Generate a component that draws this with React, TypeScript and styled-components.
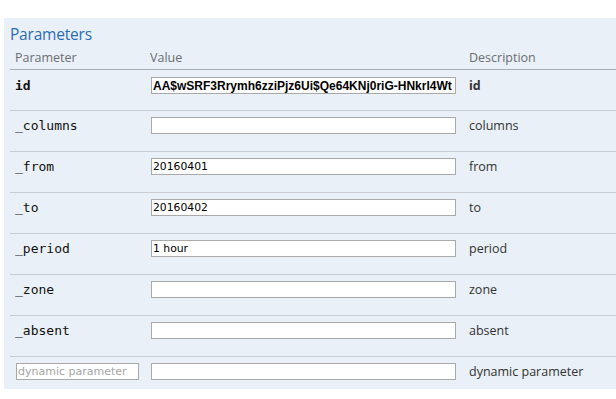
import React from "react";
import styled, { createGlobalStyle } from "styled-components";

const Global = createGlobalStyle`
  html, body { margin: 0; padding: 0; background: #ffffff; }
  body { font-family: "Open Sans", sans-serif; }
`;

const Page = styled.div`
  padding: 18px 0 0 4px;
  width: 640px;
`;

const Panel = styled.section`
  background: #e9f0f7;
  padding: 6px 0 0 6px;
`;

const Title = styled.h2`
  margin: 0;
  height: 20px;
  line-height: 20px;
  font-family: "Open Sans", sans-serif;
  font-weight: 400;
  font-size: 15.5px;
  color: #2b6cb5;
  letter-spacing: -0.2px;
`;

const Grid = styled.div`
  display: grid;
  grid-template-columns: 140px 319px 1fr;
`;

const HeadRow = styled(Grid)`
  height: 25px;
  border-bottom: 1px solid #a9adb1;
  align-items: end;
`;

const HeadCell = styled.div<{ $pad?: number }>`
  padding-left: ${(p) => p.$pad ?? 0}px;
  padding-bottom: 3px;
  font-family: "Open Sans", sans-serif;
  font-size: 12.5px;
  line-height: 16px;
  color: #6b6e72;
`;

const Row = styled(Grid)<{ $first?: boolean; $last?: boolean }>`
  height: ${(p) => (p.$first ? 40 : p.$last ? 33 : 41)}px;
  padding-top: ${(p) => (p.$first ? 7 : 6)}px;
  box-sizing: border-box;
  border-top: ${(p) => (p.$first ? "none" : "1px solid #c9cdd1")};
  align-items: start;
`;

const Name = styled.div<{ $bold?: boolean }>`
  padding-left: 5px;
  font-family: "DejaVu Sans Mono", monospace;
  font-size: 13px;
  line-height: 17px;
  font-weight: ${(p) => (p.$bold ? 700 : 400)};
  color: #111;
`;

const NameInput = styled.input`
  display: block;
  margin-left: 6px;
  width: 123px;
  height: 17px;
  box-sizing: border-box;
  border: 1px solid #a9a9a9;
  padding: 0 1px;
  font-family: "DejaVu Sans", sans-serif;
  font-size: 11px;
  background: #fff;
  outline: none;
  &::placeholder { color: #a5a5a5; }
`;

const ValueInput = styled.input<{ $bold?: boolean }>`
  display: block;
  margin-left: 1px;
  width: 305px;
  height: 17px;
  box-sizing: border-box;
  border: 1px solid #a9a9a9;
  padding: 0 1px;
  font-family: ${(p) => (p.$bold ? '"Liberation Sans", sans-serif' : '"DejaVu Sans", sans-serif')};
  font-size: ${(p) => (p.$bold ? "12px" : "10.8px")};
  font-weight: ${(p) => (p.$bold ? 700 : 400)};
  color: #000;
  background: #fff;
  outline: none;
`;

const Desc = styled.div<{ $bold?: boolean }>`
  font-family: "Open Sans", sans-serif;
  font-size: 12.5px;
  line-height: 17px;
  font-weight: ${(p) => (p.$bold ? 700 : 400)};
  color: #333;
`;

type P = { name: string; value: string; desc: string; bold?: boolean };

const params: P[] = [
  { name: "id", value: "AA$wSRF3Rrymh6zziPjz6Ui$Qe64KNj0riG-HNkrl4Wt", desc: "id", bold: true },
  { name: "_columns", value: "", desc: "columns" },
  { name: "_from", value: "20160401", desc: "from" },
  { name: "_to", value: "20160402", desc: "to" },
  { name: "_period", value: "1 hour", desc: "period" },
  { name: "_zone", value: "", desc: "zone" },
  { name: "_absent", value: "", desc: "absent" },
];

export default function App() {
  return (
    <Page>
      <Global />
      <Panel>
        <Title>Parameters</Title>
        <HeadRow>
          <HeadCell $pad={5}>Parameter</HeadCell>
          <HeadCell>Value</HeadCell>
          <HeadCell>Description</HeadCell>
        </HeadRow>
        {params.map((p, i) => (
          <Row key={p.name} $first={i === 0}>
            <Name $bold={p.bold}>{p.name}</Name>
            <div>
              <ValueInput $bold={p.bold} defaultValue={p.value} />
            </div>
            <Desc $bold={p.bold}>{p.desc}</Desc>
          </Row>
        ))}
        <Row $last>
          <div>
            <NameInput placeholder="dynamic parameter" />
          </div>
          <div>
            <ValueInput defaultValue="" />
          </div>
          <Desc>dynamic parameter</Desc>
        </Row>
      </Panel>
    </Page>
  );
}
